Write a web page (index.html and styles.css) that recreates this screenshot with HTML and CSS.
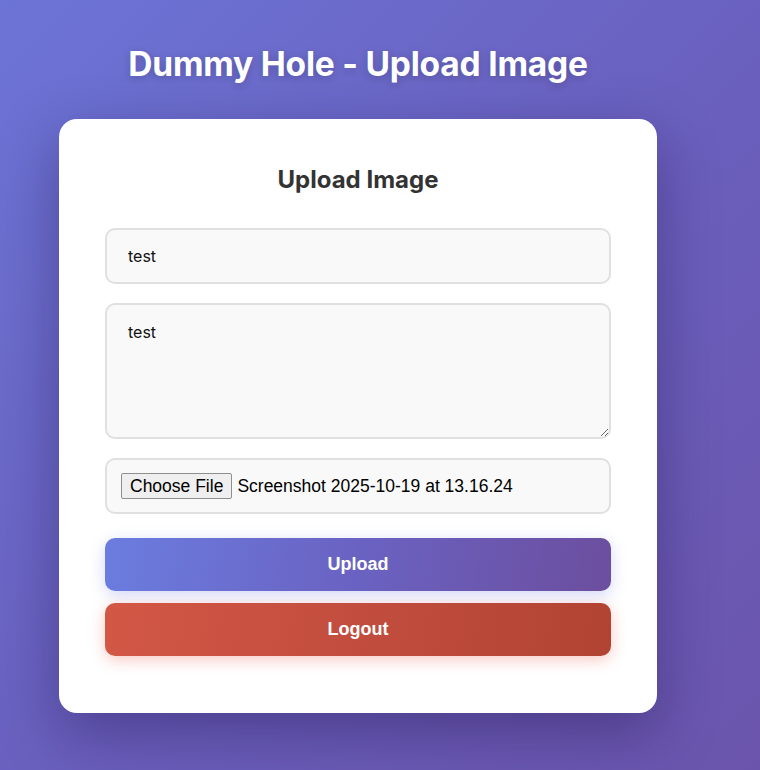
FILE: index.html
```html
<!DOCTYPE html>
<html lang="en">
<head>
    <meta charset="UTF-8">
    <meta name="viewport" content="width=device-width, initial-scale=1.0">
    <title>Dummy Hole - Upload Image</title>
    <link rel="stylesheet" href="styles.css">
</head>
<body>
    <div class="page">
        <h1>Dummy Hole - Upload Image</h1>
        <div class="card">
            <h2>Upload Image</h2>
            <form class="upload-form">
                <input type="text" class="field" name="title" value="test">
                <textarea class="field area" name="description">test</textarea>
                <div class="field file-field">
                    <span class="file-btn">Choose File</span>
                    <span class="file-name">Screenshot 2025-10-19 at 13.16.24</span>
                </div>
                <button type="button" class="btn btn-upload">Upload</button>
                <button type="button" class="btn btn-logout">Logout</button>
            </form>
        </div>
    </div>
</body>
</html>
```

FILE: styles.css
```css
html, body {
    margin: 0;
    padding: 0;
}
body {
    font-family: Inter, 'Noto Sans', sans-serif;
    background: linear-gradient(135deg, #6c74d6 0%, #6a5fbd 55%, #6b55ac 100%);
    min-height: 770px;
}
.page {
    width: 598px;
    margin-left: 59px;
    padding-top: 45px;
}
h1 {
    margin: 0 0 35px;
    text-align: center;
    color: #fff;
    font-size: 33.5px;
    font-weight: 700;
    line-height: 39px;
    letter-spacing: -0.2px;
    text-shadow: 0 2px 8px rgba(0, 0, 0, 0.2);
}
.card {
    background: #fff;
    border-radius: 18px;
    padding: 46px 46px 57px;
    box-shadow: 0 20px 60px rgba(20, 10, 60, 0.35);
}
h2 {
    margin: 0 0 34px;
    text-align: center;
    color: #333;
    font-size: 24px;
    font-weight: 700;
    line-height: 29px;
}
.upload-form {
    display: flex;
    flex-direction: column;
}
.field {
    box-sizing: border-box;
    width: 100%;
    margin: 0 0 19px;
    padding: 16px 21px;
    border: 2px solid #e0e0e0;
    border-radius: 10px;
    background: #f9f9f9;
    font-family: Inter, 'Noto Sans', sans-serif;
    font-size: 16px;
    line-height: 20px;
    color: #111;
    outline: none;
}
.area {
    height: 136px;
    padding-top: 17px;
    resize: vertical;
}
.file-field {
    display: flex;
    align-items: center;
    height: 56px;
    padding: 0 14px;
    margin-bottom: 24px;
    font-family: 'Liberation Sans', Arial, sans-serif;
}
.file-btn {
    box-sizing: border-box;
    height: 26px;
    padding: 2px 8px 0;
    border: 1px solid #8f8f8f;
    border-radius: 2px;
    background: #efefef;
    font-size: 17.5px;
    line-height: 21px;
    color: #000;
}
.file-name {
    margin-left: 5px;
    font-size: 17.5px;
    color: #000;
}
.btn {
    height: 53px;
    border: none;
    border-radius: 10px;
    color: #fff;
    font-family: 'Liberation Sans', Arial, sans-serif;
    font-size: 18px;
    font-weight: 700;
    cursor: pointer;
}
.btn-upload {
    background: linear-gradient(100deg, #6b7ddf 0%, #6a62c2 50%, #6c4e9e 100%);
    box-shadow: 0 4px 15px rgba(102, 126, 234, 0.3);
    margin-bottom: 12px;
}
.btn-logout {
    background: linear-gradient(100deg, #d35745 0%, #c24d3e 50%, #b14333 100%);
    box-shadow: 0 4px 15px rgba(231, 76, 60, 0.3);
}
```
